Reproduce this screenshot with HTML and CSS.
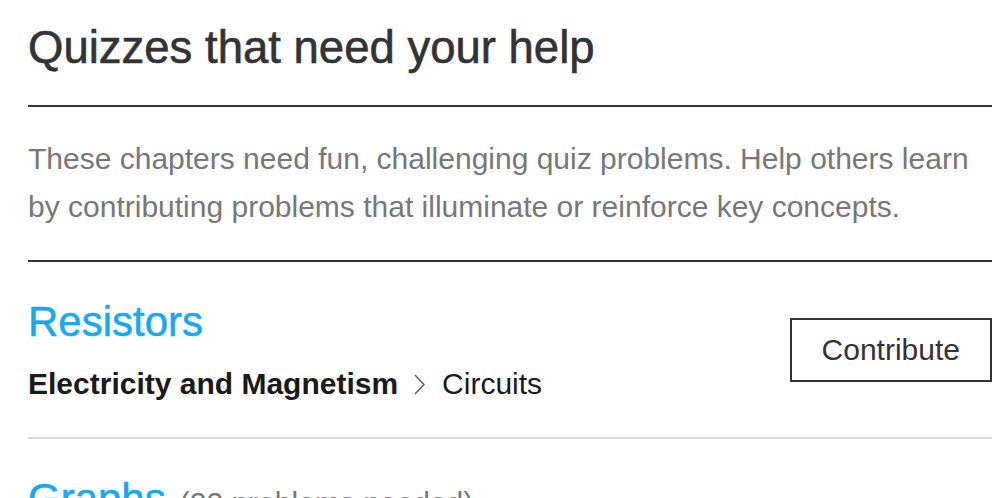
FILE: index.html
```html
<!DOCTYPE html>
<html lang="en">
<head>
    <meta charset="UTF-8">
    <meta name="viewport" content="width=device-width, initial-scale=1.0">
    <title>Quizzes that need your help</title>
    <link rel="stylesheet" href="styles.css">
</head>
<body>
    <div class="page">
        <h1 class="title">Quizzes that need your help</h1>
        <p class="intro">These chapters need fun, challenging quiz problems. Help others learn by contributing problems that illuminate or reinforce key concepts.</p>
        <ul class="quiz-list">
            <li class="quiz">
                <div class="quiz-info">
                    <a class="quiz-name" href="#">Resistors</a>
                    <div class="crumbs">
                        <span class="crumb-main">Electricity and Magnetism</span>
                        <svg class="chevron" width="11" height="21" viewBox="0 0 11 21">
                            <path d="M1 1 L10 10.5 L1 20" fill="none" stroke="#555" stroke-width="1.4"/>
                        </svg>
                        <span class="crumb-sub">Circuits</span>
                    </div>
                </div>
                <button class="contribute">Contribute</button>
            </li>
            <li class="quiz">
                <div class="quiz-info">
                    <div class="quiz-head">
                        <a class="quiz-name" href="#">Graphs</a>
                        <span class="needed">(22 problems needed)</span>
                    </div>
                </div>
            </li>
        </ul>
    </div>
</body>
</html>
```

FILE: styles.css
```css
body {
    margin: 0;
    font-family: "Liberation Sans", Arial, sans-serif;
    background-color: #fff;
    color: #333;
}
.page {
    padding: 0 16px 0 28px;
}
.title {
    margin: 0;
    padding: 22px 0 31px;
    font-size: 45.5px;
    font-weight: normal;
    line-height: 52px;
    color: #333;
    -webkit-text-stroke: 0.6px #333;
    border-bottom: 2px solid #333;
}
.intro {
    margin: 0;
    padding: 28px 0 29px;
    font-size: 30px;
    line-height: 48px;
    color: #777;
    border-bottom: 2px solid #333;
}
.quiz-list {
    list-style: none;
    margin: 0;
    padding: 0;
}
.quiz {
    display: flex;
    justify-content: space-between;
    align-items: center;
    padding: 36px 0 35px;
    border-bottom: 2px solid #d8d8d8;
}
.quiz-name {
    display: block;
    font-size: 42px;
    line-height: 48px;
    color: #16a8f0;
    text-decoration: none;
    -webkit-text-stroke: 0.5px #16a8f0;
}
.quiz-head {
    display: flex;
    align-items: baseline;
}
.needed {
    margin-left: 14px;
    font-size: 30px;
    color: #777;
}
.crumbs {
    display: flex;
    align-items: center;
    margin-top: 20px;
    font-size: 30px;
    line-height: 36px;
    color: #1a1a1a;
}
.crumb-main {
    font-weight: bold;
}
.chevron {
    margin: 0 17px 0 16px;
}
.contribute {
    padding: 12px 30px;
    font-family: inherit;
    font-size: 30px;
    line-height: 36px;
    color: #333;
    background-color: #fff;
    border: 2px solid #333;
    border-radius: 0;
    cursor: pointer;
}
```
